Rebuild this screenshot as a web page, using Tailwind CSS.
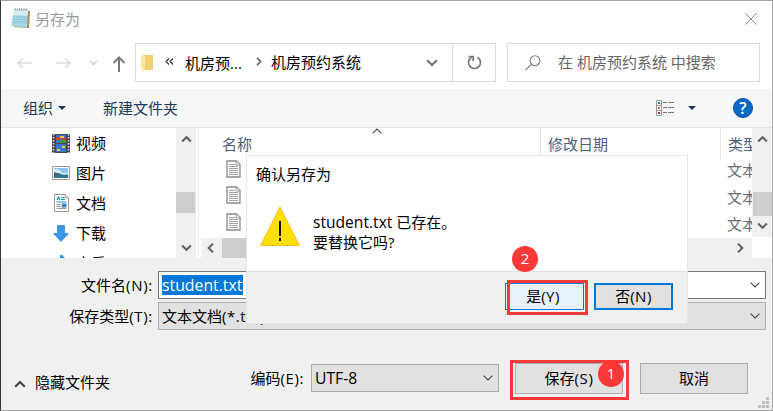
<!DOCTYPE html>
<html lang="zh-CN">
<head>
<meta charset="utf-8">
<title>另存为</title>
<script src="https://cdn.jsdelivr.net/npm/@tailwindcss/browser@4"></script>
</head>
<body class="w-[773px] h-[411px] overflow-hidden bg-white font-['Open_Sans','Noto_Sans_CJK_SC',sans-serif] text-[15px] leading-[20px] text-black whitespace-nowrap">
<svg class="hidden">
  <symbol id="down" viewBox="0 0 10 6"><path d="M.6.7 5 5 9.4.7" fill="none" stroke="#444" stroke-width="1.1"/></symbol>
  <symbol id="thick" viewBox="0 0 12 8"><path d="M1.2 1.2 6 6l4.8-4.8" fill="none" stroke="currentColor" stroke-width="2.2"/></symbol>
  <symbol id="page" viewBox="0 0 15 18"><path d="M1 1h9.500l3.500 3.500V17H1z" fill="#fff" stroke="#8a8a8a" stroke-width="1.300"/><path d="M10 1v4h4" fill="#eee" stroke="#8a8a8a" stroke-width=".8"/><path d="M3 4.500h6M3 6.500h9M3 8.500h9M3 10.500h9M3 12.500h9M3 14.500h9" stroke="#a3a3a3"/></symbol>
</svg>
<div class="relative w-[773px] h-[411px] border border-t-[#a7a5a6] border-l-[#353438] border-r-[#aaa] border-b-[#a5a5a5] bg-[#f0f0f0] flex flex-col">
  <header class="h-[42px] bg-white flex items-start pl-[10px] pr-[15px] shrink-0">
    <svg class="w-5 h-[21px] mt-[7px]" viewBox="0 0 20 21"><path d="m4 2 15 1-1 17-15-1z" fill="#a58a58"/><path d="m3 2 14 .5-1 17L0 18z" fill="#a7d8e5"/><path d="m3 2 14 .5-.3 5L2.200 7z" fill="#d8eef4"/><path d="M2 9h14M1.800 11.500h14M1.500 14h14" stroke="#7dbdcd" stroke-width=".7"/><path d="M3.500 1.500h13.500" stroke="#7794a0" stroke-width="2" stroke-dasharray="1.200 1"/></svg>
    <span class="ml-[4px] mt-[8px] text-[#999]">另存为</span>
    <svg class="ml-auto mt-[12px] w-3 h-3" viewBox="0 0 12 12"><path d="m.3.300 11.400 11.400M11.700.300.300 11.700" stroke="#888" stroke-width="1"/></svg>
  </header>
  <nav class="h-[46px] bg-white flex items-start shrink-0">
    <div class="w-[133px] h-[39px] flex items-center">
      <svg class="ml-[16px] w-[15px] h-3 shrink-0" viewBox="0 0 15 12"><path d="M15 6H1M6 1 1 6l5 5" fill="none" stroke="#dcdcdc" stroke-width="1.700"/></svg>
      <svg class="ml-[24px] w-[15px] h-3 shrink-0" viewBox="0 0 15 12"><path d="M0 6h14M9 1l5 5-5 5" fill="none" stroke="#dcdcdc" stroke-width="1.700"/></svg>
      <svg class="ml-[18px] w-[9px] h-[6px] text-[#d4d4d4] shrink-0"><use href="#thick"/></svg>
      <svg class="ml-[14px] mt-[3px] w-[14px] h-4 shrink-0" viewBox="0 0 14 16"><path d="M7 16V1.500M1.500 7 7 1.500 12.500 7" fill="none" stroke="#777" stroke-width="2"/></svg>
    </div>
    <div class="ml-px w-[361px] h-[39px] border border-[#d9d9d9] flex items-center">
      <svg class="ml-[5px] w-3 h-[18px]" viewBox="0 0 12 18"><path d="M2 1h10v15H2z" fill="#f2cf71"/><path d="M0 1.500h2.500L4 3v14l-4-1z" fill="#ffe7a1"/></svg>
      <svg class="ml-[12px] w-[9px] h-[7px] -mt-[3px]" viewBox="0 0 9 7"><path d="M4 .5 1 3.500l3 3M8 .5 5 3.500l3 3" fill="none" stroke="#333" stroke-width="1.200"/></svg>
      <span class="ml-[11px] w-[58px]">机房预...</span>
      <svg class="ml-[13px] w-[6px] h-[9px] -mt-[3px]" viewBox="0 0 6 9"><path d="m1 .8 3.700 3.700L1 8.200" fill="none" stroke="#666" stroke-width="1.700"/></svg>
      <span class="ml-[9px] -mt-px">机房预约系统</span>
      <svg class="ml-auto mr-[14px] w-3 h-2 text-[#777]"><use href="#thick"/></svg>
      <div class="w-[43px] h-full border-l border-[#d9d9d9] flex items-center justify-center">
        <svg class="w-[15px] h-[15px]" viewBox="0 0 15 15"><path d="M10.500 2.300a6 6 0 1 1-6 0M1.500 1.500h4.700v4.700" fill="none" stroke="#777" stroke-width="1.700"/></svg>
      </div>
    </div>
    <div class="ml-[11px] w-[253px] h-[39px] border border-[#d9d9d9] flex items-center">
      <svg class="ml-[17px] w-4 h-4" viewBox="0 0 16 16"><circle cx="10" cy="5.700" r="4.900" fill="none" stroke="#777" stroke-width="1.100"/><path d="M6.500 9.200.5 15.200" stroke="#777" stroke-width="1.200"/></svg>
      <span class="ml-[17px] -mt-px text-[#666]">在 机房预约系统 中搜索</span>
    </div>
  </nav>
  <div class="h-[39px] bg-[#f4f6f8] border-b border-[#e4e5e7] flex items-center text-[#1e395b] shrink-0">
    <span class="ml-[22px]">组织</span>
    <svg class="ml-[5px] w-2 h-1" viewBox="0 0 8 4"><path d="M0 0h8L4 4z" fill="#1e395b"/></svg>
    <span class="ml-[37px]">新建文件夹</span>
    <svg class="ml-auto w-[18px] h-4" viewBox="0 0 18 16"><path d="M.5.500h5v15h-5zM.5 5.500h5M.5 10.500h5" fill="#fff" stroke="#999"/><path d="M7 2.500h4m1 0h6M7 7.500h4m1 0h6M7 12.500h4m1 0h6" stroke="#777"/><path d="M2 2h2v2H2z" fill="#2870aa"/><path d="M2 7h2v2H2z" fill="#b48537"/><path d="M2 12h2v2H2z" fill="#c22"/></svg>
    <svg class="ml-[14px] w-2 h-1" viewBox="0 0 8 4"><path d="M0 0h8L4 4z" fill="#1e395b"/></svg>
    <span class="ml-[37px] mr-[19px] w-5 h-5 rounded-full bg-[#0869c9] border border-[#07509b] text-white text-[16px] leading-[18px] text-center font-semibold">?</span>
  </div>
  <main class="h-[130px] flex bg-white overflow-hidden shrink-0">
    <aside class="w-[175px] pl-[51px] overflow-hidden">
      <div class="h-[30px] flex items-center"><svg class="w-[18px] h-[19px]" viewBox="0 0 18 19"><path d="M0 0h18v19H0z" fill="#464646"/><path d="M1.500 0v19M16.500 0v19" stroke="#ddd" stroke-width="1.600" stroke-dasharray="1.500 1.500"/><path d="M4 1h10v8H4zM4 10h10v8H4z" fill="#3b73d9"/><path d="M4 3h4v3H4z" fill="#dc3c28"/><path d="M8 2h4v2H8z" fill="#efd334"/><path d="M7 6h7v3H7z" fill="#419348"/><path d="M10 4h4v2h-4z" fill="#d84128"/><path d="M5 15h3v2H5zM10 12h3v2h-3z" fill="#f0c832"/></svg><span class="ml-[6px]">视频</span></div>
      <div class="h-[30px] flex items-center"><svg class="w-[18px] h-[14px]" viewBox="0 0 18 14"><path d="M.5.500h17v13H.5z" fill="#fff" stroke="#999"/><path d="M2 2h14v10H2z" fill="#8bc3ee"/><path d="M2 3.500q5-1 7 2t7 1v2H2z" fill="#d8edf5"/><path d="M2 7q4-1 7 1t7 0v4H2z" fill="#337393"/><path d="M2 6q3 1 4 3l-4 1z" fill="#376b4b"/></svg><span class="ml-[6px]">图片</span></div>
      <div class="h-[30px] flex items-center"><svg class="ml-[2px] w-[15px] h-[18px]" viewBox="0 0 15 18"><path d="M.5.500H11l3.500 3.500v13.500H.5z" fill="#fff" stroke="#999"/><path d="M11 .5V4h3.500" fill="none" stroke="#999"/><path d="m3 6 1.500-3L6 6M7 3.500h3M7 5.500h4M2.500 8h10" fill="none" stroke="#1991ce" stroke-width="1.200"/><path d="M2.500 10.500H7M2.500 12.500H7M2.500 14.500h10" stroke="#999"/><path d="M8 9.500h4.500v4H8z" fill="#3487b5"/></svg><span class="ml-[7px]">文档</span></div>
      <div class="h-[30px] flex items-center"><svg class="ml-[1px] w-4 h-[17px]" viewBox="0 0 16 17"><path d="M4.500.500h7v8h4L8 16.500.5 8.500h4z" fill="#3999e8" stroke="#287dcc" stroke-width=".7"/></svg><span class="ml-[7px]">下载</span></div>
      <div class="h-[30px] flex items-start"><svg class="ml-[8px] mt-[7px] w-[10px] h-5" viewBox="0 0 10 20"><path d="M1 0v18M1 0q1 3 5 5" fill="none" stroke="#189aec" stroke-width="2.500"/></svg><span class="ml-[6px] mt-[5px]">音乐</span></div>
    </aside>
    <div class="w-[20px] bg-[#f0f0f0] flex flex-col items-center text-[#606060]">
      <svg class="mt-[7px] w-[11px] h-[8px] rotate-180"><use href="#thick"/></svg>
      <div class="mt-[49px] w-[19px] h-[21px] bg-[#cdcdcd] mr-px"></div>
      <svg class="mt-[31px] w-[11px] h-[8px]"><use href="#thick"/></svg>
    </div>
    <div class="w-[3px] border-r border-[#ececec] box-border"></div>
    <section class="w-[552px] ml-[1px] flex flex-col overflow-hidden">
      <div class="h-[110px] overflow-hidden">
        <div class="relative h-[32px] flex text-[#4c607a]">
          <span class="w-[341px] shrink-0 border-r border-[#e5e5e5] pl-[22px] pt-[6px]">名称</span>
          <span class="w-[180px] shrink-0 border-r border-[#e5e5e5] pl-[7px] pt-[6px]">修改日期</span>
          <span class="pl-[7px] pt-[6px] shrink-0">类型</span>
          <svg class="absolute left-[172px] top-0 w-[10px] h-[6px] rotate-180"><use href="#down"/></svg>
        </div>
        <div class="h-[27px] -mt-[2px] flex items-start text-[#6d6d6d]"><svg class="ml-[26px] mt-[2px] w-[15px] h-[18px] shrink-0"><use href="#page"/></svg><span class="ml-[486px] mt-[2px]">文本</span></div>
        <div class="h-[27px] flex items-start text-[#6d6d6d]"><svg class="ml-[26px] mt-[1px] w-[15px] h-[18px] shrink-0"><use href="#page"/></svg><span class="ml-[486px] mt-[2px]">文本</span></div>
        <div class="h-[27px] flex items-start text-[#6d6d6d]"><svg class="ml-[26px] mt-[1px] w-[15px] h-[18px] shrink-0"><use href="#page"/></svg><span class="ml-[486px] mt-[2px]">文本</span></div>
      </div>
      <div class="h-[20px] ml-[1px] bg-[#f0f0f0] flex items-center text-[#606060]">
        <svg class="ml-[4px] w-[11px] h-[8px] rotate-90"><use href="#thick"/></svg>
        <div class="ml-[6px] w-[300px] h-full bg-[#cdcdcd]"></div>
        <svg class="ml-auto mr-[6px] w-[11px] h-[8px] -rotate-90"><use href="#thick"/></svg>
      </div>
    </section>
    <div class="w-[20px] h-[109px] bg-[#f0f0f0] flex flex-col items-center text-[#606060]">
      <svg class="mt-[7px] w-[11px] h-[8px] rotate-180"><use href="#thick"/></svg>
      <div class="mt-[49px] w-[19px] h-[24px] bg-[#cdcdcd]"></div>
      <svg class="mt-[6px] w-[11px] h-[8px]"><use href="#thick"/></svg>
    </div>
  </main>
  <div class="mt-[13px] flex items-center h-[28px] shrink-0">
    <label class="w-[152px] mr-[5px] text-right">文件名<span class="tracking-[.7px]">(N):</span></label>
    <div class="w-[608px] h-full bg-white border border-[#7a7a7a] flex items-center"><span class="ml-[3px] w-[81px] bg-[#0078d7] text-white text-[15.8px]">student.txt</span><svg class="ml-auto mr-[5px] w-[10px] h-[6px]"><use href="#down"/></svg></div>
  </div>
  <div class="mt-[3px] flex items-center h-[28px] shrink-0">
    <label class="w-[152px] mr-[5px] text-right">保存类型<span class="tracking-[.7px]">(T):</span></label>
    <div class="w-[608px] h-full bg-[#e1e1e1] border border-[#adadad] flex items-center"><span class="ml-[3px]">文本文档<span class="tracking-[.5px]">(*.txt)</span></span><svg class="ml-auto mr-[5px] w-[10px] h-[6px]"><use href="#down"/></svg></div>
  </div>
  <footer class="mt-[33px] h-[31px] flex items-start">
    <svg class="ml-[13px] mt-[17px] w-3 h-2 rotate-180 text-[#444]"><use href="#thick"/></svg>
    <span class="ml-[9px] mt-[9px] w-[75px]">隐藏文件夹</span>
    <label class="w-[194px] mt-[5px] mr-[7px] text-right">编码<span class="tracking-[.6px]">(E):</span></label>
    <div class="mt-px w-[188px] h-[28px] bg-[#e1e1e1] border border-[#adadad] flex items-center"><span class="ml-[3px] text-[15.700px]">UTF-8</span><svg class="ml-auto mr-[5px] w-[10px] h-[6px]"><use href="#down"/></svg></div>
    <button class="ml-[16px] w-[108px] h-[31px] pb-[2px] bg-[#e1e1e1] border border-[#adadad]">保存<span class="tracking-[.7px]">(S)</span></button>
    <button class="ml-[17px] w-[108px] h-[31px] pb-px bg-[#e1e1e1] border border-[#adadad]">取消</button>
  </footer>
  <svg class="absolute right-[3px] bottom-[2px] w-[11px] h-[11px]" viewBox="0 0 11 11"><path d="M8 0h3v3H8zM4 4h3v3H4zM8 4h3v3H8zM0 8h3v3H0zM4 8h3v3H4zM8 8h3v3H8z" fill="#bfbfbf"/></svg>

  <div class="absolute left-[245px] top-[154px] w-[442px] h-[169px] bg-white border border-[#e5e5e5] flex flex-col">
    <span class="ml-[9px] mt-[8px]">确认另存为</span>
    <div class="flex mt-[22px] h-[65px]">
      <svg class="ml-[13px] w-10 h-10" viewBox="0 0 40 40"><path d="M20 1 39.500 39.500H.5z" fill="#ffe000" stroke="#fdb92c"/><path d="M20 15v15M20 32v3" stroke="#111" stroke-width="2"/></svg>
      <div class="ml-[13px] mt-[6px]"><p><span class="text-[15.600px]">student.txt</span> 已存在。</p><p>要替换它吗?</p></div>
    </div>
    <div class="flex-1 bg-[#f0f0f0] border-t border-[#dfdfdf] flex items-start pt-[11px] pl-[258px]">
      <button class="w-[79px] h-[27px] pb-[2px] pr-[3px] border border-[#0078d7] bg-[#e5f1fb]">是<span class="tracking-[.5px]">(Y)</span></button>
      <button class="ml-[10px] w-[79px] h-[27px] pb-[2px] border-2 border-[#0078d7] bg-[#e1e1e1]">否<span class="tracking-[.5px]">(N)</span></button>
    </div>
  </div>
  <div class="absolute left-[506px] top-[279px] w-[81px] h-[35px] border-3 border-[#fb3939]"></div>
  <div class="absolute left-[509px] top-[359px] w-[119px] h-[40px] border-3 border-[#fb3939]"></div>
  <div class="absolute left-[511px] top-[245px] w-[26px] h-[26px] rounded-full bg-[#fb3939] text-white text-center leading-[25px]">2</div>
  <div class="absolute left-[597px] top-[360px] w-[26px] h-[26px] rounded-full bg-[#fb3939] text-white text-center leading-[24px]">1</div>
</div>
</body>
</html>
